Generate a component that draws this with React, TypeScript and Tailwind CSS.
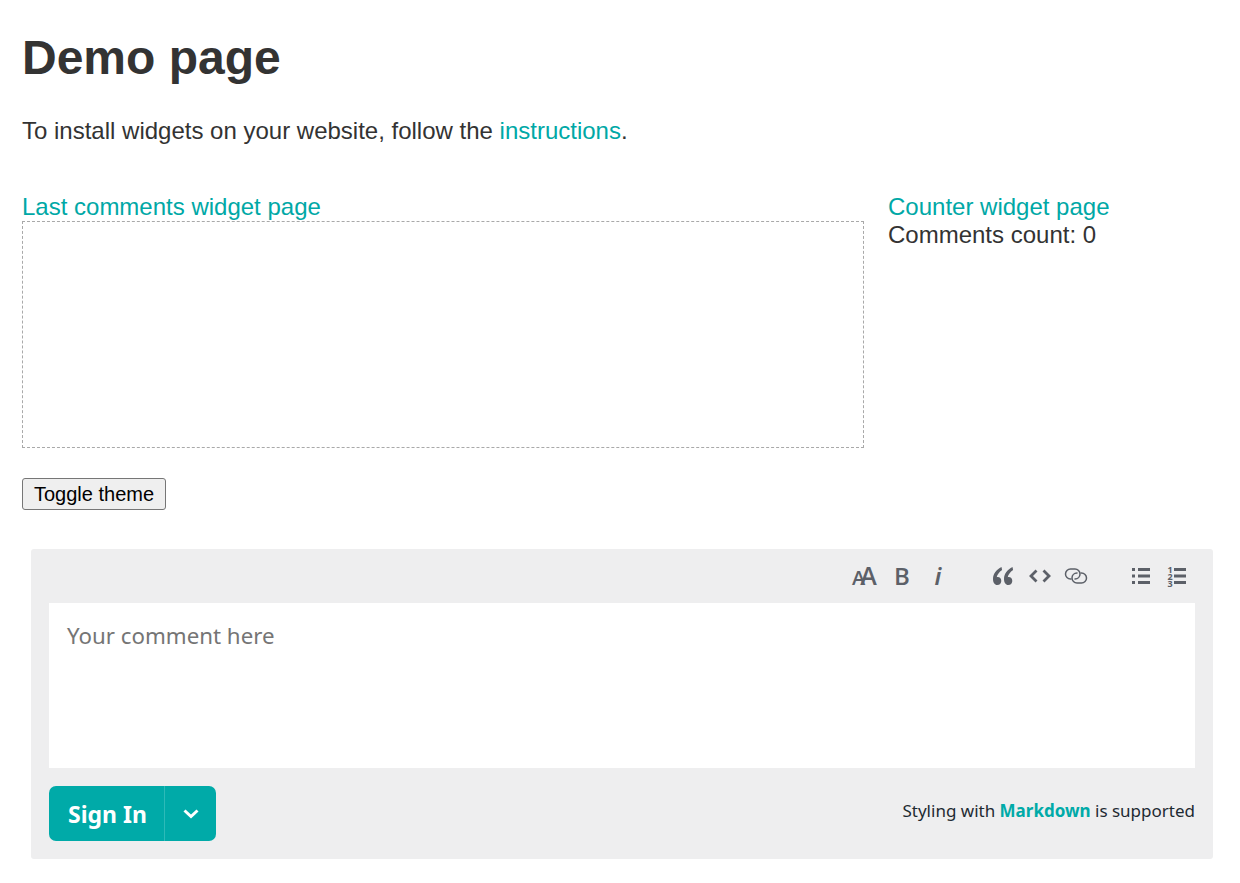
import type { ReactNode } from "react";

const ICON_TEXT = { fontFamily: '"Open Sans", sans-serif' };

function ToolButton({ width = 36, children }: { width?: number; children: ReactNode }) {
  return (
    <button type="button" className="flex h-[22px] items-center justify-center text-[#5c6068]" style={{ width }}>
      {children}
    </button>
  );
}

function TextSizeIcon() {
  return (
    <svg width="26" height="22" viewBox="0 0 26 22" fill="currentColor" className="overflow-visible" aria-hidden="true">
      <text x="-1" y="19.500" fontWeight="600" style={ICON_TEXT}>
        <tspan fontSize="20">A</tspan>
        <tspan fontSize="25" dx="-5">A</tspan>
      </text>
    </svg>
  );
}

function QuoteIcon() {
  return (
    <svg width="22" height="20" viewBox="0 0 22 20" fill="currentColor" className="ml-[-2px]" aria-hidden="true">
      <path d="M9.500 1C4.500 3.500 1 7.500 1 13c0 3.600 1.700 6 4.300 6 2.300 0 4-1.800 4-4.100 0-2.300-1.500-3.900-3.600-3.900-.4 0-.8.1-1 .2.500-2.700 2.500-5.300 5.400-7.300z" />
      <path d="M20.500 1C15.500 3.500 12 7.500 12 13c0 3.600 1.700 6 4.300 6 2.300 0 4-1.800 4-4.100 0-2.300-1.500-3.900-3.600-3.900-.4 0-.8.1-1 .2.500-2.700 2.500-5.300 5.400-7.300z" />
    </svg>
  );
}

function CodeIcon() {
  return (
    <svg width="22" height="16" viewBox="0 0 22 16" fill="none" stroke="currentColor" strokeWidth="2.800" className="ml-[-1px]" aria-hidden="true">
      <path d="M7.500 2.500 2 8l5.500 5.500M14.500 2.500 20 8l-5.500 5.500" />
    </svg>
  );
}

function LinkIcon() {
  return (
    <svg width="24" height="18" viewBox="0 0 24 18" fill="none" stroke="currentColor" strokeWidth="1.500" strokeLinecap="round" aria-hidden="true">
      <path d="M7 12H6.500a5 5 0 0 1 0-10H11a5 5 0 0 1 5 5c0 2.800-2.200 5-5 5" />
      <path d="M17 6h.5a5 5 0 0 1 0 10H13a5 5 0 0 1-5-5c0-2.800 2.200-5 5-5" />
    </svg>
  );
}

function BulletListIcon() {
  return (
    <svg width="20" height="20" viewBox="0 0 20 20" fill="currentColor" aria-hidden="true">
      <rect x="1" y="2" width="3" height="3" />
      <rect x="1" y="8.500" width="3" height="3" />
      <rect x="1" y="15" width="3" height="3" />
      <rect x="7" y="2" width="12" height="3" />
      <rect x="7" y="8.500" width="12" height="3" />
      <rect x="7" y="15" width="12" height="3" />
    </svg>
  );
}

function NumberListIcon() {
  return (
    <svg width="20" height="20" viewBox="0 0 20 20" fill="currentColor" className="overflow-visible" aria-hidden="true">
      <text fontSize="9" fontWeight="700" style={ICON_TEXT}>
        <tspan x="0.500" y="6.500">1</tspan>
        <tspan x="0.500" y="13.500">2</tspan>
        <tspan x="0.500" y="20.500">3</tspan>
      </text>
      <rect x="7" y="2" width="12" height="3" />
      <rect x="7" y="8.500" width="12" height="3" />
      <rect x="7" y="15" width="12" height="3" />
    </svg>
  );
}

function CommentForm() {
  return (
    <div className="ml-[9px] mr-[5px] rounded-[3px] bg-[#eeeeef] p-[18px] font-['Open_Sans',sans-serif]">
      <div className="flex h-[18px] items-center justify-end">
        <div className="ml-[-2px] flex items-center">
          <ToolButton><TextSizeIcon /></ToolButton>
          <ToolButton><span className="text-[24px] font-semibold leading-none">B</span></ToolButton>
          <ToolButton><span className="font-['Noto_Sans',sans-serif] text-[24px] font-semibold italic leading-none">i</span></ToolButton>
        </div>
        <div className="w-[30px]" />
        <ToolButton><QuoteIcon /></ToolButton>
        <ToolButton><CodeIcon /></ToolButton>
        <ToolButton><LinkIcon /></ToolButton>
        <div className="w-[29px]" />
        <ToolButton><BulletListIcon /></ToolButton>
        <ToolButton><NumberListIcon /></ToolButton>
      </div>
      <div className="mt-[18px] h-[165px] bg-white px-[18px] pt-[17px] font-['Noto_Sans',sans-serif] text-[22.300px] leading-[31px] text-[#757575]">
        Your comment here
      </div>
      <div className="mt-[18px] flex items-start justify-between">
        <div className="flex h-[55px] w-[167px] rounded-[7px] bg-[#00aaa8] text-white">
          <button type="button" className="w-[116px] border-r border-[#2dbab8] pl-[2px] text-center font-['Noto_Sans',sans-serif] text-[23px] font-bold">
            Sign In
          </button>
          <button type="button" className="flex flex-1 items-center justify-center">
            <svg width="16" height="10" viewBox="0 0 16 10" fill="none" stroke="currentColor" strokeWidth="3" aria-hidden="true">
              <path d="m1.500 1.500 6.500 6 6.500-6" />
            </svg>
          </button>
        </div>
        <p className="mt-[12px] font-['Noto_Sans',sans-serif] text-[17px] leading-[26px] text-[#1e2a32]">
          Styling with <a className="font-bold text-[#00aaa8]">Markdown</a> is supported
        </p>
      </div>
    </div>
  );
}

export default function App() {
  return (
    <div className="min-h-[883px] bg-white px-[22px] pt-[30px] font-['Liberation_Sans',Arial,sans-serif] text-[24px] leading-[28px] text-[#333333]">
      <h1 className="text-[48px] font-bold leading-[56px]">Demo page</h1>
      <p className="mt-[31px]">
        To install widgets on your website, follow the <a className="text-[#00a8a6]">instructions</a>.
      </p>
      <div className="mt-[48px] flex gap-[24px]">
        <div className="w-[842px]">
          <a className="block text-[#00a8a6]">Last comments widget page</a>
          <div className="h-[227px] border border-dashed border-[#a9a9a9]" />
        </div>
        <div>
          <a className="block text-[#00a8a6]">Counter widget page</a>
          <div>Comments count: 0</div>
        </div>
      </div>
      <button
        type="button"
        className="mt-[30px] block h-[32px] w-[144px] rounded-[3px] border border-[#767676] bg-[#efefef] text-center text-[20px] leading-none text-black"
      >
        Toggle theme
      </button>
      <div className="mt-[39px]">
        <CommentForm />
      </div>
    </div>
  );
}
